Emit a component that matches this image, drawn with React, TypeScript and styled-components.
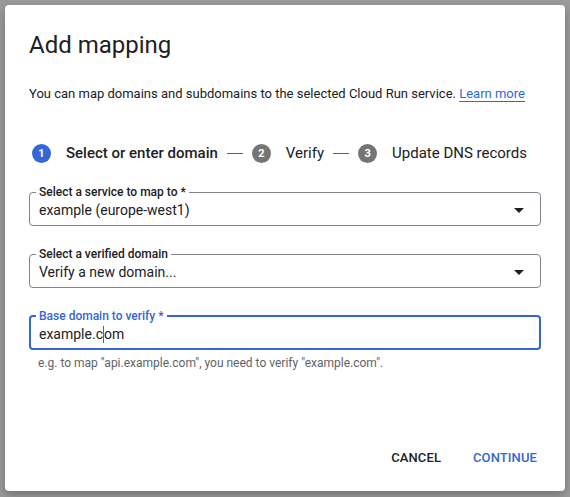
import React from 'react';
import styled, { createGlobalStyle } from 'styled-components';

const BLUE = '#3367d6';

const GlobalStyle = createGlobalStyle`
  html, body {
    margin: 0;
    padding: 0;
  }
  body {
    background: #9a9a9a;
    font-family: Roboto, "Liberation Sans", Arial, sans-serif;
    color: #202124;
    -webkit-font-smoothing: antialiased;
  }
`;

const Backdrop = styled.div`
  width: 570px;
  height: 497px;
  box-sizing: border-box;
  padding: 5px;
`;

const Dialog = styled.div`
  width: 560px;
  height: 486px;
  box-sizing: border-box;
  background: #fff;
  border-radius: 4px;
  box-shadow: 0 4px 10px rgba(0, 0, 0, 0.25);
  display: flex;
  flex-direction: column;
  padding: 24px 24px 16px;
`;

const Title = styled.h2`
  margin: 0;
  font-size: 24px;
  line-height: 32px;
  font-weight: 400;
  color: #202124;
`;

const Description = styled.p`
  margin: 23px 0 0;
  font-size: 13px;
  line-height: 20px;
  color: #202124;
`;

const Link = styled.a`
  color: ${BLUE};
  text-decoration: underline;
  text-underline-offset: 3px;
  cursor: pointer;
`;

const Stepper = styled.div`
  display: flex;
  align-items: center;
  height: 24px;
  margin-top: 37px;
  margin-left: 3px;
  white-space: nowrap;
`;

const Step = styled.div`
  display: flex;
  align-items: center;
  flex-shrink: 0;
  gap: 15px;
`;

const StepNumber = styled.span<{ $active?: boolean }>`
  width: 19px;
  height: 19px;
  border-radius: 50%;
  background: ${p => (p.$active ? BLUE : '#757575')};
  color: #fff;
  font-size: 11px;
  font-weight: 700;
  display: flex;
  align-items: center;
  justify-content: center;
`;

const StepLabel = styled.span<{ $active?: boolean }>`
  font-size: 15px;
  font-weight: ${p => (p.$active ? 500 : 400)};
  color: #202124;
`;

const StepDivider = styled.span`
  flex-shrink: 0;
  width: 16px;
  height: 1px;
  background: #5f6368;
  margin: 0 9px;
`;

const Form = styled.div`
  display: flex;
  flex-direction: column;
  gap: 20px;
  margin-top: 19px;
`;

const Field = styled.fieldset<{ $focused?: boolean }>`
  margin: 0;
  min-width: 0;
  border: ${p => (p.$focused ? `2px solid ${BLUE}` : '1px solid #80868b')};
  border-radius: 4px;
  padding: ${p => (p.$focused ? '0 15px 4px 8px' : '0 16px 5px 9px')};
`;

const Legend = styled.legend<{ $focused?: boolean }>`
  font-size: 12px;
  line-height: 16px;
  font-weight: 500;
  padding: 0 3px;
  margin-left: -3px;
  color: ${p => (p.$focused ? BLUE : '#202124')};
`;

const ValueRow = styled.div`
  display: flex;
  align-items: center;
  justify-content: space-between;
  height: 20px;
  font-size: 14px;
  color: #202124;
`;

const Arrow = styled.span`
  width: 0;
  height: 0;
  border-left: 5px solid transparent;
  border-right: 5px solid transparent;
  border-top: 5px solid #202124;
`;

const Caret = styled.span`
  display: inline-block;
  width: 1px;
  height: 17px;
  background: ${BLUE};
  vertical-align: -4px;
`;

const Helper = styled.div`
  margin-top: -15px;
  padding-left: 9px;
  font-size: 12px;
  line-height: 16px;
  color: #5f6368;
`;

const Actions = styled.div`
  margin-top: auto;
  margin-right: -4px;
  display: flex;
  justify-content: flex-end;
  gap: 16px;
`;

const Button = styled.button<{ $primary?: boolean }>`
  height: 36px;
  padding: 0 8px;
  border: none;
  background: transparent;
  font-family: inherit;
  font-size: 13px;
  font-weight: 500;
  letter-spacing: 0.1px;
  text-transform: uppercase;
  color: ${p => (p.$primary ? BLUE : '#202124')};
  cursor: pointer;
`;

export default function App() {
  return (
    <>
      <GlobalStyle />
      <Backdrop>
        <Dialog>
          <Title>Add mapping</Title>
          <Description>
            You can map domains and subdomains to the selected Cloud Run service.{' '}
            <Link>Learn more</Link>
          </Description>

          <Stepper>
            <Step>
              <StepNumber $active>1</StepNumber>
              <StepLabel $active>Select or enter domain</StepLabel>
            </Step>
            <StepDivider />
            <Step>
              <StepNumber>2</StepNumber>
              <StepLabel>Verify</StepLabel>
            </Step>
            <StepDivider />
            <Step>
              <StepNumber>3</StepNumber>
              <StepLabel>Update DNS records</StepLabel>
            </Step>
          </Stepper>

          <Form>
            <Field>
              <Legend>Select a service to map to *</Legend>
              <ValueRow>
                <span>example (europe-west1)</span>
                <Arrow />
              </ValueRow>
            </Field>
            <Field>
              <Legend>Select a verified domain</Legend>
              <ValueRow>
                <span>Verify a new domain...</span>
                <Arrow />
              </ValueRow>
            </Field>
            <Field $focused>
              <Legend $focused>Base domain to verify *</Legend>
              <ValueRow>
                <span>
                  example.c<Caret />om
                </span>
              </ValueRow>
            </Field>
            <Helper>e.g. to map "api.example.com", you need to verify "example.com".</Helper>
          </Form>

          <Actions>
            <Button>Cancel</Button>
            <Button $primary>Continue</Button>
          </Actions>
        </Dialog>
      </Backdrop>
    </>
  );
}
